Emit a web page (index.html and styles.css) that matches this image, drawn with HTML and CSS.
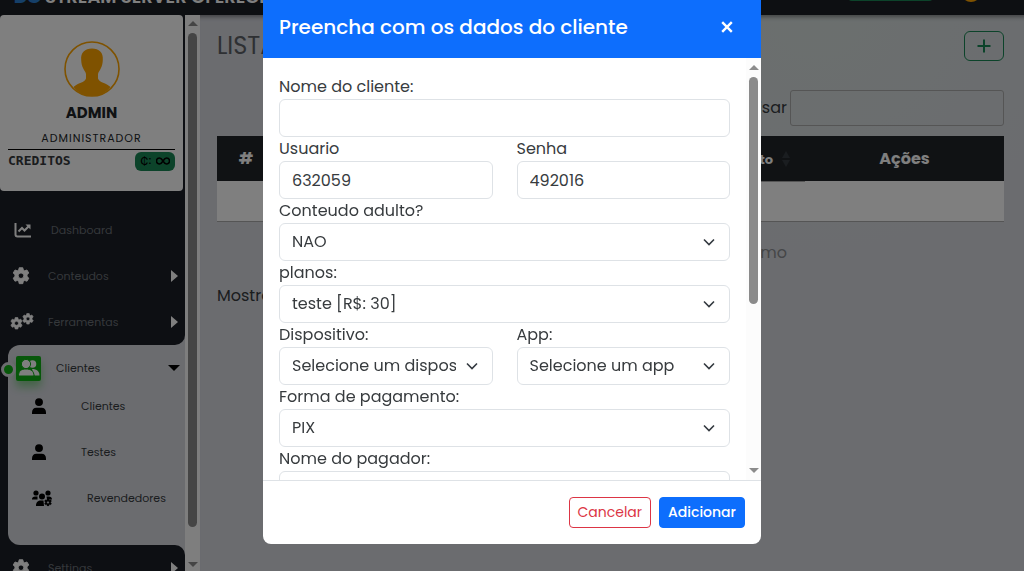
FILE: index.html
```html
<!DOCTYPE html>
<html lang="pt-BR">
<head>
<meta charset="utf-8">
<meta name="viewport" content="width=device-width, initial-scale=1">
<title>Lista de clientes</title>
<link rel="stylesheet" href="styles.css">
</head>
<body>
<svg class="defs" aria-hidden="true">
  <symbol id="gear" viewBox="0 0 20 20">
    <path fill-rule="evenodd" d="M8 .8h4l.6 2.6 1.5.8 2.5-.9 2.1 3.4-2 1.9v1.8l2 2-2 3.4-2.6-.8-1.5.9-.6 2.6H8l-.6-2.6-1.5-.9-2.6.8-2-3.4 2-2V8.600l-2-1.900 2.100-3.400 2.500.900 1.500-.800zM10 6.600a3.100 3.100 0 1 0 0 6.200 3.100 3.100 0 0 0 0-6.200z" stroke="currentColor" stroke-linejoin="round"/>
  </symbol>
  <symbol id="person" viewBox="0 0 16 18">
    <circle cx="8" cy="4.500" r="4.500"/><path d="M0 18v-1.500c0-3.500 2-5.500 5-5.500h6c3 0 5 2 5 5.500V18z"/>
  </symbol>
</svg>

<header class="topbar">
  <span class="brand"><b>DG</b>STREAM SERVER OFERECE</span>
  <span class="topbar-pill"></span><span class="topbar-dot"></span>
</header>

<div class="shell">
  <aside class="sidebar">
    <div class="side-content">
      <section class="profile">
        <svg class="avatar" viewBox="0 0 56 56" aria-hidden="true">
          <circle cx="28" cy="28" r="27" fill="none" stroke="currentColor" stroke-width="1.600"/>
          <path fill="currentColor" d="M28 7.500c7 0 11.500 4 10.800 11.500-.1 3-.6 6-2.300 9-1 2-2.500 3.500-2.500 5.500v4c1 4 8.500 4.500 12.500 8.500C42 52 35 55 28 55S14 52 9.500 46c4-4 11.500-4.500 12.500-8.500v-4c0-2-1.500-3.500-2.500-5.500-1.700-3-2.200-6-2.300-9C16.500 11.500 21 7.500 28 7.500z"/>
        </svg>
        <h2 class="profile-name">ADMIN</h2>
        <p class="profile-role">ADMINISTRADOR</p>
        <div class="credits"><span>CREDITOS</span><span class="credits-badge">₵: <svg viewBox="0 0 14 8" aria-hidden="true"><path d="M7 4C5.500 1.500 4.500 1 3.500 1a3 3 0 0 0 0 6C4.500 7 5.500 6.500 7 4s2.500-3 3.500-3a3 3 0 0 1 0 6C9.500 7 8.500 6.500 7 4z"/></svg></span></div>
      </section>
      <nav class="menu">
        <div class="menu-block menu-top">
          <a class="item item-wide" href="#"><svg viewBox="0 0 18 16" aria-hidden="true"><path d="M1.500 1v11.500a2 2 0 0 0 2 2H17M4.500 9.500 8 6l2.500 2.500L15 4" fill="none" stroke="currentColor" stroke-width="2"/><path d="M11.500 2.500h5v5z"/></svg><span>Dashboard</span></a>
          <a class="item" href="#"><svg aria-hidden="true"><use href="#gear"/></svg><span>Conteudos</span><i class="arrow"></i></a>
          <a class="item" href="#"><svg class="gears" viewBox="0 0 24 18" aria-hidden="true"><use href="#gear" x="0" y="4" width="13" height="13"/><use href="#gear" x="12" y="0" width="12" height="12"/></svg><span>Ferramentas</span><i class="arrow"></i></a>
        </div>
        <div class="menu-open">
          <a class="item item-active" href="#"><span class="active-icon"><svg viewBox="0 0 22 18" aria-hidden="true"><circle cx="14.500" cy="5" r="3.800"/><path d="M14 10c5 0 7.500 2.500 7.500 6.500h-5z"/><circle cx="8" cy="5" r="4.600" class="front"/><path class="front" d="M.5 17c0-5 2.500-7 7.500-7s8 2 8 7z"/></svg></span><span>Clientes</span><i class="arrow-down"></i></a>
          <a class="item sub" href="#"><svg class="person"><use href="#person"/></svg><span>Clientes</span></a>
          <a class="item sub" href="#"><svg class="person"><use href="#person"/></svg><span>Testes</span></a>
          <a class="item sub" href="#"><svg class="group" viewBox="0 0 20 17" aria-hidden="true"><circle cx="4" cy="3" r="2.600"/><circle cx="16" cy="3" r="2.600"/><circle cx="10" cy="6.500" r="3"/><path d="M0 9.500c0-2.500 1.500-3 5.500-3v3zM14.500 6.500c4 0 5.500.500 5.500 3h-5zM4 16c0-4 2-5.500 5-5.500h2.500L12 16z"/><use href="#gear" x="12" y="8.500" width="8" height="8"/></svg><span>Revendedores</span></a>
        </div>
        <div class="menu-block menu-bottom">
          <a class="item" href="#"><svg aria-hidden="true"><use href="#gear"/></svg><span>Settings</span><i class="arrow"></i></a>
        </div>
      </nav>
    </div>
    <div class="scroll side-scroll"><i class="scroll-up"></i><i class="thumb"></i><i class="scroll-down"></i></div>
  </aside>

  <main class="page">
    <div class="page-head"><h1>LISTA</h1><button class="add" type="button" aria-label="Adicionar cliente"><svg viewBox="0 0 14 14"><path d="M7 .5v13M.5 7h13"/></svg></button></div>
    <div class="search"><label for="q">Pesquisar</label><input id="q" type="text"></div>
    <table class="clients">
      <thead><tr><th class="c-id">#</th><th class="c-exp"><span>Vencimento</span><svg viewBox="0 0 8 16" aria-hidden="true"><path d="M4 0 8 7H0zM4 16 0 9h8z"/></svg></th><th class="c-act">Ações</th></tr></thead>
      <tbody><tr><td colspan="3"></td></tr></tbody>
    </table>
    <div class="pager"><a href="#">Próximo</a></div>
    <p class="info">Mostrando 0 registros</p>
  </main>
</div>

<div class="backdrop">
  <form class="modal" role="dialog" aria-labelledby="modal-title">
    <header class="modal-head"><h2 id="modal-title">Preencha com os dados do cliente</h2><button class="close" type="button" aria-label="Fechar"><svg viewBox="0 0 10 10"><path d="M1 1l8 8M9 1 1 9"/></svg></button></header>
    <div class="modal-body">
      <div class="fields">
        <div class="field"><label for="nome">Nome do cliente:</label><input id="nome" type="text"></div>
        <div class="row">
          <div class="field"><label for="usuario">Usuario</label><input id="usuario" type="text" value="632059"></div>
          <div class="field"><label for="senha">Senha</label><input id="senha" type="text" value="492016"></div>
        </div>
        <div class="field"><label for="adulto">Conteudo adulto?</label><div class="pick"><select id="adulto"><option>NAO</option></select><svg viewBox="0 0 12 8"><path d="m1 1.500 5 5 5-5"/></svg></div></div>
        <div class="field"><label for="planos">planos:</label><div class="pick"><select id="planos"><option>teste [R$: 30]</option></select><svg viewBox="0 0 12 8"><path d="m1 1.500 5 5 5-5"/></svg></div></div>
        <div class="row">
          <div class="field"><label for="disp">Dispositivo:</label><div class="pick"><select id="disp"><option>Selecione um dispositivo</option></select><svg viewBox="0 0 12 8"><path d="m1 1.500 5 5 5-5"/></svg></div></div>
          <div class="field"><label for="app">App:</label><div class="pick"><select id="app"><option>Selecione um app</option></select><svg viewBox="0 0 12 8"><path d="m1 1.500 5 5 5-5"/></svg></div></div>
        </div>
        <div class="field"><label for="forma">Forma de pagamento:</label><div class="pick"><select id="forma"><option>PIX</option></select><svg viewBox="0 0 12 8"><path d="m1 1.500 5 5 5-5"/></svg></div></div>
        <div class="field"><label for="pagador">Nome do pagador:</label><input id="pagador" type="text"></div>
      </div>
      <div class="scroll modal-scroll"><i class="scroll-up"></i><i class="thumb"></i><i class="scroll-down"></i></div>
    </div>
    <footer class="modal-foot"><button class="btn cancel" type="button">Cancelar</button><button class="btn submit" type="submit">Adicionar</button></footer>
  </form>
</div>
</body>
</html>
```

FILE: styles.css
```css
*, *::before, *::after { box-sizing: border-box; }
body {
  margin: 0;
  height: 100vh;
  display: flex;
  flex-direction: column;
  overflow: hidden;
  background: #d6d8df;
  color: #373b3e;
  font: 16px/24px Poppins, Inter, "Open Sans", sans-serif;
}
h1, h2, p { margin: 0; }
a { color: inherit; text-decoration: none; }
input, select, button { font: inherit; color: inherit; margin: 0; }
.defs { position: absolute; width: 0; height: 0; }
svg { fill: currentColor; flex: none; }

.topbar {
  flex: none;
  height: 15px;
  display: flex;
  align-items: flex-end;
  overflow: hidden;
  padding: 0 43px 0 14px;
  background: #1b1e25;
  color: #fff;
}
.brand { flex: 1; font-size: 18px; line-height: 24px; font-weight: 600; padding-bottom: 6px; white-space: nowrap; }
.brand b { margin-right: 4px; color: #2b7fd0; }
.topbar-pill { width: 85px; height: 30px; margin: 0 28px 14px 0; border: 2px solid #198754; border-radius: 4px; }
.topbar-dot { width: 20px; height: 20px; margin-bottom: 13px; border-radius: 50%; background: #ffa500; }

.shell { flex: 1; min-height: 0; display: flex; }
.sidebar { flex: none; width: 200px; display: flex; background: #1b1e26; }
.side-content { flex: 1; min-width: 0; overflow: hidden; }
.profile {
  height: 176px;
  margin-right: 2px;
  padding: 26px 8px 0;
  border-radius: 4px;
  background: #fff;
  color: #212529;
  text-align: center;
}
.avatar { display: block; width: 56px; height: 56px; margin: 0 auto; color: #ffa500; }
.profile-name { margin-top: 6px; font-size: 15px; line-height: 20px; font-weight: 700; }
.profile-role { padding: 6px 0 2px; font-size: 11px; line-height: 18px; letter-spacing: 1px; border-bottom: 1px solid #000; }
.credits { display: flex; justify-content: space-between; align-items: center; margin-top: 1px; color: #34383c; font: 700 13px/20px "DejaVu Sans Mono", monospace; }
.credits-badge {
  display: flex;
  align-items: center;
  justify-content: center;
  gap: 4px;
  width: 40px;
  height: 19px;
  border-radius: 6px;
  background: #198754;
  color: #000;
  font: 500 11px/19px Inter, sans-serif;
}
.credits-badge svg { width: 14px; height: 8px; fill: none; stroke: currentColor; stroke-width: 1.5; }

.menu { display: flex; flex-direction: column; background: linear-gradient(90deg, #1b1e26 50%, #d6d8df 50%); }
.menu-block { background: #1b1e26; color: #6a7077; }
.menu-top { padding-top: 16px; border-bottom-right-radius: 10px; }
.menu-open { height: 200px; margin-left: 8px; border-radius: 12px 0 0 12px; background: #d6d8df; }
.menu-bottom { border-top-right-radius: 10px; }
.item { position: relative; display: flex; align-items: center; height: 46px; padding: 0 7px 0 12px; font-size: 11px; line-height: 18px; }
.item > svg { width: 18px; height: 18px; margin-right: 18px; color: #fff; }
.item > .gears { width: 24px; height: 18px; margin: 0 14px 0 -2px; }
.item-wide > svg { width: 18px; height: 16px; margin: 0 19px 0 2px; }
.arrow, .arrow-down { margin-left: auto; }
.arrow { border: 6px solid transparent; border-left: 7px solid #fff; border-right: 0; }
.arrow-down { border: 6px solid transparent; border-top: 6px solid #000; border-bottom: 0; }
.item-active { padding: 0 5px 0 8px; }
.item-active::before {
  content: "";
  position: absolute;
  left: -7px;
  top: 17px;
  width: 15px;
  height: 15px;
  border: 3px solid #d6d8df;
  border-radius: 50%;
  background: #0fae14;
}
.active-icon { display: grid; place-items: center; width: 25px; height: 25px; margin-right: 15px; border-radius: 2px; background: #0fae14; color: #fff; box-shadow: 0 6px 9px #0fae1466; }
.active-icon svg { width: 22px; height: 18px; }
.active-icon .front { stroke: #0fae14; stroke-width: 1; }
.sub { padding-left: 24px; }
.item-active + .sub { margin-top: -8px; }
.sub > svg { color: #000; }
.sub > .person { width: 14px; height: 16px; margin-right: 35px; }
.sub > .group { width: 20px; height: 17px; margin-right: 35px; }

.scroll { flex: none; display: flex; flex-direction: column; align-items: center; background: #fcfcfc; }
.side-scroll { width: 15px; padding: 6px 0 4px; }
.scroll-up, .scroll-down { border: 5px solid transparent; }
.scroll-up { border-top: 0; border-bottom: 5px solid #8b8b8b; }
.scroll-down { border-bottom: 0; border-top: 5px solid #8b8b8b; margin-top: auto; }
.thumb { width: 9px; border-radius: 5px; background: #8b8b8b; }
.side-scroll .thumb { flex: 1; margin: 7px 0 35px; }

.page { flex: 1; min-width: 0; padding: 16px 20px 0 17px; background: radial-gradient(ellipse at 75% 0, #d6dfdd 0, #d6d8df 35%); box-shadow: inset 0 6px 4px -4px #0006; }
.page-head { display: flex; justify-content: space-between; }
.page-head h1 { color: #5c6166; font-size: 24px; line-height: 30px; font-weight: 400; }
.add { width: 40px; height: 30px; padding: 0; border: 1px solid #198754; border-radius: 6px; background: none; color: #198754; display: grid; place-items: center; }
.add svg { width: 14px; height: 14px; stroke: currentColor; stroke-width: 2; }
.search { display: flex; justify-content: flex-end; align-items: center; gap: 3px; margin: 29px 0 10px; color: #373b3e; }
.search input { width: 214px; height: 36px; border: 1px solid #aaa; border-radius: 3px; background: none; }
.clients { width: 100%; border-collapse: collapse; table-layout: fixed; color: #fff; }
.clients th { height: 45px; padding: 0; background: #212529; font-weight: 700; }
.clients td { height: 40px; background: #fff; border-bottom: 1px solid #aaa; }
.c-id { width: 58px; }
.c-act { width: 199px; }
.clients .c-exp { font-size: 13px; text-align: right; padding: 4px 15px 0 0; border-bottom: 1px solid #aaa; }
.c-exp svg { width: 8px; height: 16px; margin: -4px 0 0 9px; vertical-align: middle; color: #343a40; }
.pager { margin-top: 19px; padding-right: 217px; text-align: right; color: #8b8d90; }
.info { margin-top: 19px; color: #373b3e; }

.backdrop { position: fixed; inset: 0; display: flex; justify-content: center; align-items: flex-start; background: #00000080; }
.modal { width: 498px; max-width: 100%; border-radius: 0 0 8px 8px; overflow: hidden; background: #fff; }
.modal-head { display: flex; align-items: center; justify-content: space-between; padding: 12px 28px 16px 16px; background: #0d6efd; color: #fff; }
.modal-head h2 { font-size: 20px; line-height: 30px; font-weight: 500; }
.close { display: grid; padding: 0; border: 0; background: none; }
.close svg { width: 12px; height: 12px; stroke: currentColor; stroke-width: 2; }
.modal-body { height: 422px; display: flex; overflow: hidden; }
.fields { flex: 1; min-width: 0; padding: 17px 16px 0; }
.field { flex: 1; min-width: 0; }
.field label { display: block; }
.field input, .field select { display: block; width: 100%; height: 38px; border: 1px solid #dee2e6; border-radius: 6px; background: #fff; padding: 0 12px; }
.row { display: flex; gap: 24px; }
.pick { position: relative; }
.field select { appearance: none; padding-right: 36px; }
.pick svg { position: absolute; right: 15px; top: 15px; width: 12px; height: 8px; fill: none; stroke: #343a40; stroke-width: 1.6; pointer-events: none; }
.modal-scroll { width: 15px; padding: 7px 0; }
.modal-scroll .thumb { height: 227px; margin-top: 7px; }
.modal-foot { display: flex; justify-content: flex-end; gap: 8px; padding: 16px; border-top: 1px solid #dee2e6; }
.btn { height: 31px; padding: 0 8px; border: 1px solid; border-radius: 4px; font-size: 14px; line-height: 21px; background: #fff; }
.cancel { color: #dc3545; }
.submit { background: #0d6efd; border-color: #0d6efd; color: #fff; font-weight: 500; }
```
